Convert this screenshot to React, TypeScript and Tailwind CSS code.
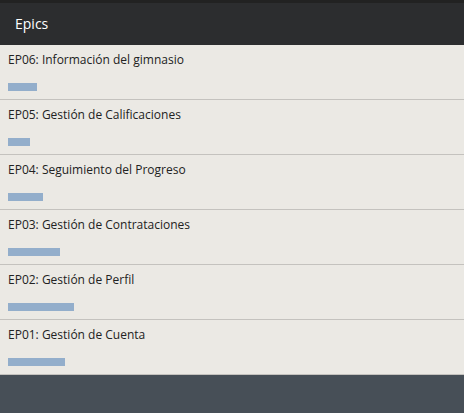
const epics = [
  { code: "EP06", name: "Información del gimnasio", bar: 29 },
  { code: "EP05", name: "Gestión de Calificaciones", bar: 22 },
  { code: "EP04", name: "Seguimiento del Progreso", bar: 35 },
  { code: "EP03", name: "Gestión de Contrataciones", bar: 52 },
  { code: "EP02", name: "Gestión de Perfil", bar: 66 },
  { code: "EP01", name: "Gestión de Cuenta", bar: 57 },
];

export default function App() {
  return (
    <div
      className="w-[464px] h-[413px] flex flex-col bg-[#474f57] overflow-hidden"
      style={{ fontFamily: '"Open Sans", "Noto Sans", sans-serif' }}
    >
      <div className="h-[3px] bg-[#222222]" />
      <div className="h-[42px] bg-[#2c2d2f] flex items-center px-[15px]">
        <span className="text-white text-[14px] leading-none">Epics</span>
      </div>
      <div className="bg-[#ebe9e4]">
        {epics.map((e) => (
          <div key={e.code} className="pt-[5px] pb-[8px] px-[8px] border-b border-[#c4c2be]">
            <div className="text-[12px] leading-[20px] text-[#222]">
              {e.code}: {e.name}
            </div>
            <div className="mt-[13px] h-[8px] bg-[#93aecb]" style={{ width: e.bar }} />
          </div>
        ))}
      </div>
    </div>
  );
}
